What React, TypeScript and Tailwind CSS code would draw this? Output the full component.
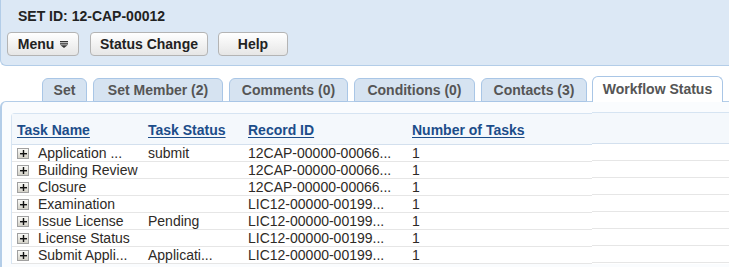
import React from "react";

const tabs = [
  { label: "Set", w: "w-[45px]" },
  { label: "Set Member (2)", w: "w-[130px]" },
  { label: "Comments (0)", w: "w-[119px]" },
  { label: "Conditions (0)", w: "w-[121px]" },
  { label: "Contacts (3)", w: "w-[106px]" },
];

const rows = [
  { name: "Application ...", status: "submit", record: "12CAP-00000-00066...", count: "1" },
  { name: "Building Review", status: "", record: "12CAP-00000-00066...", count: "1" },
  { name: "Closure", status: "", record: "12CAP-00000-00066...", count: "1" },
  { name: "Examination", status: "", record: "LIC12-00000-00199...", count: "1" },
  { name: "Issue License", status: "Pending", record: "LIC12-00000-00199...", count: "1" },
  { name: "License Status", status: "", record: "LIC12-00000-00199...", count: "1" },
  { name: "Submit Appli...", status: "Applicati...", record: "LIC12-00000-00199...", count: "1" },
];

const btn =
  "h-[24px] rounded-[4px] border border-[#b4b4b4] bg-gradient-to-b from-white to-[#e6e6e6] font-bold text-[#222] flex items-center justify-center";

const PlusBox: React.FC = () => (
  <span className="flex h-[11px] w-[12px] shrink-0 items-center justify-center border border-[#a0a0a0] bg-gradient-to-b from-[#fbfbf8] to-[#d4d2c8]">
    <svg width="7" height="7" viewBox="0 0 7 7">
      <rect x="0" y="3" width="7" height="1.4" fill="#111" />
      <rect x="2.8" y="0" width="1.4" height="7" fill="#111" />
    </svg>
  </span>
);

const App: React.FC = () => {
  return (
    <div
      className="h-[267px] w-[729px] overflow-hidden bg-white text-[14px] leading-[16px]"
      style={{ fontFamily: '"Liberation Sans", Arial, sans-serif' }}
    >
      {/* header panel */}
      <div className="h-[66px] w-[760px] rounded-bl-[6px] border-b border-l border-[#b3cde8] bg-[#dce8f5]">
        <div className="pl-[17px] pt-[8px] font-bold text-[#222]">SET ID: 12-CAP-00012</div>
        <div className="mt-[8px] flex gap-[10px] pl-[6px]">
          <button className={`${btn} w-[72px] gap-[6px]`}>
            Menu
            <svg width="8" height="7" viewBox="0 0 8 7">
              <rect x="0" y="0" width="8" height="1.3" fill="#333" />
              <rect x="0" y="2.2" width="8" height="1.3" fill="#333" />
              <path d="M0.5 4.3 H7.5 L4 7 Z" fill="#333" />
            </svg>
          </button>
          <button className={`${btn} ml-px w-[118px]`}>Status Change</button>
          <button className={`${btn} w-[70px]`}>Help</button>
        </div>
      </div>

      {/* tabs */}
      <div className="relative z-10 -mb-px mt-[10px] flex items-end gap-[6px] pl-[42px]">
        {tabs.map((t) => (
          <div
            key={t.label}
            className={`${t.w} flex h-[24px] items-center justify-center rounded-t-[6px] border border-[#a9c6e6] bg-[#d6e3f1] font-bold text-[#555]`}
          >
            {t.label}
          </div>
        ))}
        <div className="-ml-px flex h-[26px] w-[131px] items-center justify-center rounded-t-[6px] border border-b-0 border-[#a9c6e6] bg-white pb-[2px] font-bold text-[#555]">
          Workflow Status
        </div>
      </div>

      {/* content panel */}
      <div className="h-[200px] w-[760px] rounded-tl-[6px] border-l-2 border-t border-[#b3cde8] bg-[#fafcfe] pl-[9px] pt-[11px]">
        <div className="flex">
          <div className="w-[581px] rounded-tl-[4px] border-l border-t border-[#d6e4f2] bg-white">
            <div className="flex h-[31px] items-center border-b border-[#d3e0ee] bg-[#f4f8fc] pt-px font-bold text-[#1c4d8a] underline underline-offset-[2px]">
              <div className="w-[136px] pl-[5px]">Task Name</div>
              <div className="w-[100px]">Task Status</div>
              <div className="w-[164px]">Record ID</div>
              <div className="flex-1">Number of Tasks</div>
            </div>
            {rows.map((r) => (
              <div key={r.name} className="flex h-[17px] items-center border-b border-[#e6e6e6] text-[#2e2a26]">
                <div className="flex w-[136px] items-center gap-[9px] pl-[5px]">
                  <PlusBox />
                  <span className="whitespace-nowrap">{r.name}</span>
                </div>
                <div className="w-[100px] whitespace-nowrap">{r.status}</div>
                <div className="w-[164px] whitespace-nowrap">{r.record}</div>
                <div className="flex-1">{r.count}</div>
              </div>
            ))}
          </div>
          <div className="-mt-px flex-1 border-t border-[#d6e4f2] bg-white">
            <div className="h-[31px] border-b border-[#d3e0ee] bg-[#f4f8fc]" />
            {rows.map((r) => (
              <div key={r.name} className="h-[17px] border-b border-[#e6e6e6]" />
            ))}
          </div>
        </div>
      </div>
    </div>
  );
};

export default App;
